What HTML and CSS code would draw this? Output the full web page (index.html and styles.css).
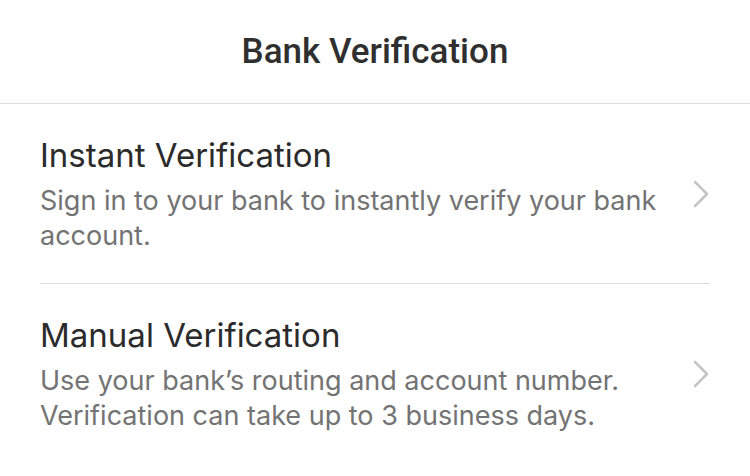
FILE: index.html
```html
<!DOCTYPE html>
<html lang="en">
<head>
    <meta charset="UTF-8">
    <meta name="viewport" content="width=device-width, initial-scale=1.0">
    <title>Bank Verification</title>
    <link rel="stylesheet" href="styles.css">
</head>
<body>
    <div class="header">
        <h1>Bank Verification</h1>
    </div>

    <div class="lista">
        <div class="opcion">
            <div class="texto">
                <h2>Instant Verification</h2>
                <p>Sign in to your bank to instantly verify your bank account.</p>
            </div>
            <svg class="chevron" width="18" height="28" viewBox="0 0 18 28">
                <polyline points="3,2 15,14 3,26" />
            </svg>
        </div>

        <div class="opcion">
            <div class="texto">
                <h2>Manual Verification</h2>
                <p>Use your bank’s routing and account number.<br>Verification can take up to 3 business days.</p>
            </div>
            <svg class="chevron" width="18" height="28" viewBox="0 0 18 28">
                <polyline points="3,2 15,14 3,26" />
            </svg>
        </div>
    </div>
</body>
</html>
```

FILE: styles.css
```css
* {
    margin: 0;
    padding: 0;
    box-sizing: border-box;
}
body {
    background-color: #fff;
    color: #2b2b2b;
    font-family: 'Inter', 'Noto Sans', sans-serif;
}
.header {
    height: 104px;
    border-bottom: 1px solid #dcdcdc;
    display: flex;
    align-items: center;
    justify-content: center;
}
.header h1 {
    font-family: 'Roboto', sans-serif;
    font-weight: 500;
    font-size: 35px;
    color: #2f2f2f;
}
.lista {
    padding: 0 40px;
}
.opcion {
    display: flex;
    align-items: center;
    padding: 31px 0 30px;
    border-bottom: 1px solid #dcdcdc;
}
.opcion:last-child {
    border-bottom: none;
}
.texto {
    flex: 1;
}
.texto h2 {
    font-size: 33px;
    font-weight: 400;
    line-height: 40px;
    color: #2b2b2b;
}
.texto p {
    margin-top: 8px;
    font-size: 27px;
    line-height: 35px;
    color: #737373;
    padding-right: 24px;
}
.chevron {
    flex-shrink: 0;
}
.chevron polyline {
    fill: none;
    stroke: #c4c4c8;
    stroke-width: 2.5;
    stroke-linecap: round;
    stroke-linejoin: round;
}
```
